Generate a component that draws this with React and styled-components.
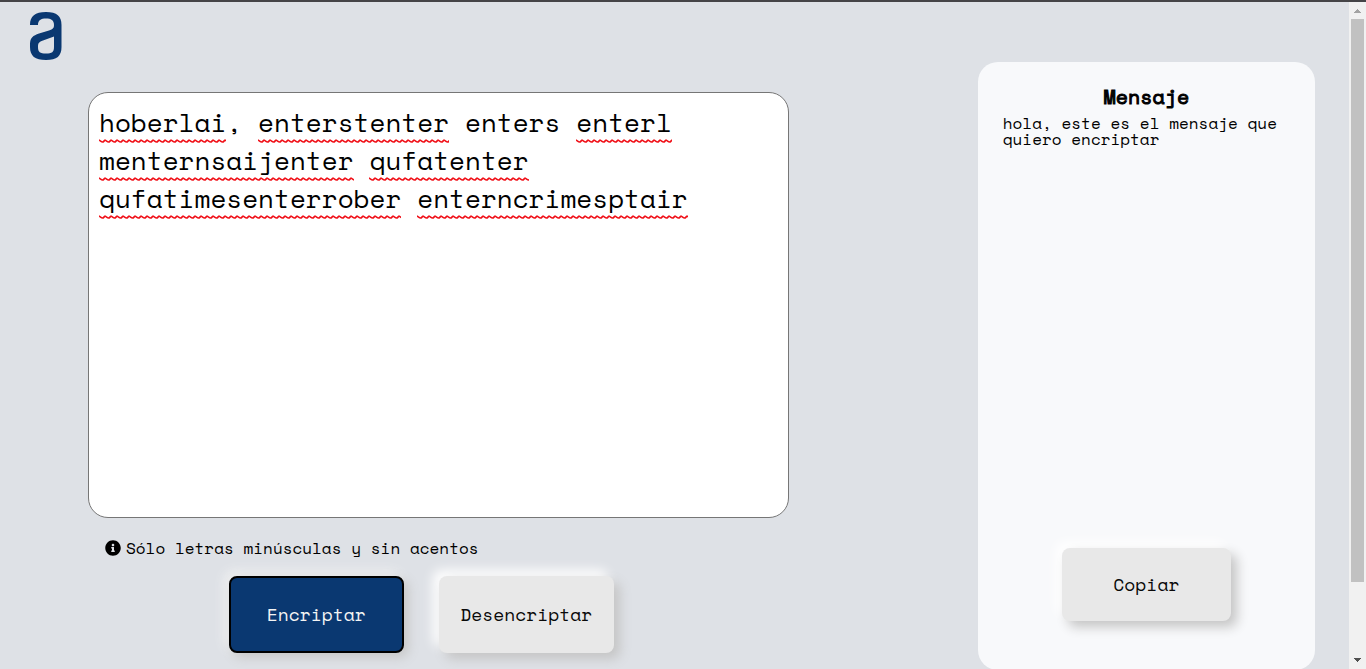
import React, { useState } from "react";
import styled, { createGlobalStyle, css } from "styled-components";
import { FaInfoCircle } from "react-icons/fa";

const GlobalStyle = createGlobalStyle`
  *, *::before, *::after { box-sizing: border-box; }
  html, body { margin: 0; padding: 0; }
  body {
    background: #dee1e6;
    color: #000;
    font-family: "Space Mono", "Liberation Mono", monospace;
    font-size: 16px;
    line-height: 16px;
    overflow: hidden;
  }
`;

const Window = styled.div`
  display: flex;
  height: 100vh;
  border-top: 2px solid #454447;
`;

const Page = styled.div`
  flex: 1;
  min-width: 0;
  display: flex;
  align-items: flex-start;
  background: #dee1e6;
  overflow: hidden;
`;

const LogoLink = styled.a`
  flex: none;
  width: 88px;
  padding: 10px 0 0 29px;
  svg { display: block; }
`;

const Editor = styled.main`
  width: 52%;
  padding-top: 90px;
`;

const TextFrame = styled.div`
  position: relative;
  height: 426px;
`;

const TextBox = styled.textarea`
  display: block;
  width: 100%;
  height: 100%;
  padding: 10px;
  border: 1px solid #767676;
  border-radius: 20px;
  background: #fff;
  color: #000;
  font-family: inherit;
  font-size: 26px;
  line-height: 38px;
  resize: none;
  outline: none;
  overflow: hidden;
`;

const SpellLayer = styled.div`
  position: absolute;
  inset: 0;
  padding: 13px 11px;
  font-size: 26px;
  pointer-events: none;
`;

const SpellLine = styled.div`
  display: flex;
  align-items: flex-end;
  height: 38px;
`;

const Squiggle = styled.span`
  width: ${(p) => p.$chars}ch;
  height: 4px;
  ${(p) =>
    p.$wrong &&
    css`
      background: url("data:image/svg+xml,%3Csvg xmlns='http://www.w3.org/2000/svg' width='6' height='4'%3E%3Cpath d='M-1 1C1 1 2 3 3.500 3S5 1 7 1' fill='none' stroke='%23f01018' stroke-width='1.700'/%3E%3C/svg%3E") repeat-x;
    `}
`;

const Hint = styled.p`
  display: flex;
  align-items: center;
  gap: 5px;
  margin: 22px 0 0 17px;
  svg { flex: none; }
`;

const Actions = styled.div`
  display: flex;
  justify-content: center;
  gap: 35px;
  margin-top: 20px;
  padding-right: 35px;
`;

const Button = styled.button`
  width: ${(p) => p.$width || 175}px;
  height: ${(p) => p.$height || 77}px;
  padding: 0 0 1px;
  border: ${(p) => (p.$primary ? "2px solid #000" : "0")};
  border-radius: 8px;
  background: ${(p) => (p.$primary ? "#0a3871" : "#e8e8e8")};
  color: ${(p) => (p.$primary ? "#f4f4f4" : "#090909")};
  font-family: inherit;
  font-size: 18px;
  line-height: 24px;
  cursor: pointer;
  box-shadow: ${(p) =>
    p.$primary
      ? "4px 4px 12px #c5c5c5, -4px -4px 12px #f4f4f4"
      : "6px 6px 12px #c5c5c5, -6px -6px 12px #ffffff"};
`;

const Card = styled.aside`
  display: flex;
  flex-direction: column;
  align-items: center;
  width: 25%;
  height: 608px;
  margin: 60px 34px 0 auto;
  padding: 25px;
  border-radius: 20px;
  background: #f8f9fb;
`;

const CardTitle = styled.h1`
  margin: 0;
  font-size: 20px;
  font-weight: 400;
  line-height: 20px;
  -webkit-text-stroke: 1px currentColor;
`;

const Message = styled.p`
  flex: 1;
  align-self: stretch;
  margin: 8px 0 0;
`;

const CopyRow = styled.div`
  padding-bottom: 24px;
`;

const Scrollbar = styled.div`
  flex: none;
  display: flex;
  flex-direction: column;
  align-items: center;
  width: 17px;
  background: #f1f1f1;
`;

const Arrow = styled.svg`
  flex: none;
  width: 17px;
  height: 17px;
`;

const Track = styled.div`
  flex: 1;
  width: 13px;
`;

const Thumb = styled.div`
  height: 89%;
  background: #c1c1c1;
`;

const START = `hoberlai, enterstenter enters enterl
menternsaijenter qufatenter
qufatimesenterrober enterncrimesptair`;

const KNOWN = ["enters"];

function spans(line) {
  return line.match(/[a-z]+|[^a-z]+/g) || [];
}

export default function App() {
  const [text, setText] = useState(START);
  return (
    <>
      <GlobalStyle />
      <Window>
        <Page>
          <LogoLink href="#" aria-label="Inicio">
            <svg width="34" height="48" viewBox="0 0 34 48">
              <path
                fill="#0a3871"
                fillRule="evenodd"
                d="M1 13C1 4 6 0 17 0C28 0 32.500 4 32.500 13V35C32.500 44 28 48 17 48C6 48 1 44 1 35V32C1 26 4 23.500 10 21.500L20 18.500C24 17 25 16 25 13C25 8 22 6.500 17 6.500C12 6.500 9 8 9 13ZM25 24.500L14 28.500C10 30 9 31 9 35C9 40 11 41.500 17 41.500C23 41.500 25 40 25 35Z"
              />
            </svg>
          </LogoLink>
          <Editor>
            <TextFrame>
              <TextBox
                aria-label="Texto"
                spellCheck={false}
                value={text}
                onChange={(e) => setText(e.target.value)}
              />
              <SpellLayer aria-hidden="true">
                {text.split("\n").map((line, i) => (
                  <SpellLine key={i}>
                    {spans(line).map((part, j) => (
                      <Squiggle
                        key={j}
                        $chars={part.length}
                        $wrong={/[a-z]/.test(part) && !KNOWN.includes(part)}
                      />
                    ))}
                  </SpellLine>
                ))}
              </SpellLayer>
            </TextFrame>
            <Hint>
              <FaInfoCircle size={16} aria-hidden="true" />
              Sólo letras minúsculas y sin acentos
            </Hint>
            <Actions>
              <Button type="button" $primary>Encriptar</Button>
              <Button type="button">Desencriptar</Button>
            </Actions>
          </Editor>
          <Card>
            <CardTitle>Mensaje</CardTitle>
            <Message>hola, este es el mensaje que quiero encriptar</Message>
            <CopyRow>
              <Button type="button" $width={169} $height={73}>Copiar</Button>
            </CopyRow>
          </Card>
        </Page>
        <Scrollbar aria-hidden="true">
          <Arrow viewBox="0 0 17 17" shapeRendering="crispEdges">
            <path d="M8 7h1v1h1v1h1v1h1v1H5v-1h1V9h1V8h1z" fill="#a3a3a3" />
          </Arrow>
          <Track>
            <Thumb />
          </Track>
          <Arrow viewBox="0 0 17 17" shapeRendering="crispEdges">
            <path d="M5 6h7v1h-1v1h-1v1H9v1H8V9H7V8H6V7H5z" fill="#505050" />
          </Arrow>
        </Scrollbar>
      </Window>
    </>
  );
}
